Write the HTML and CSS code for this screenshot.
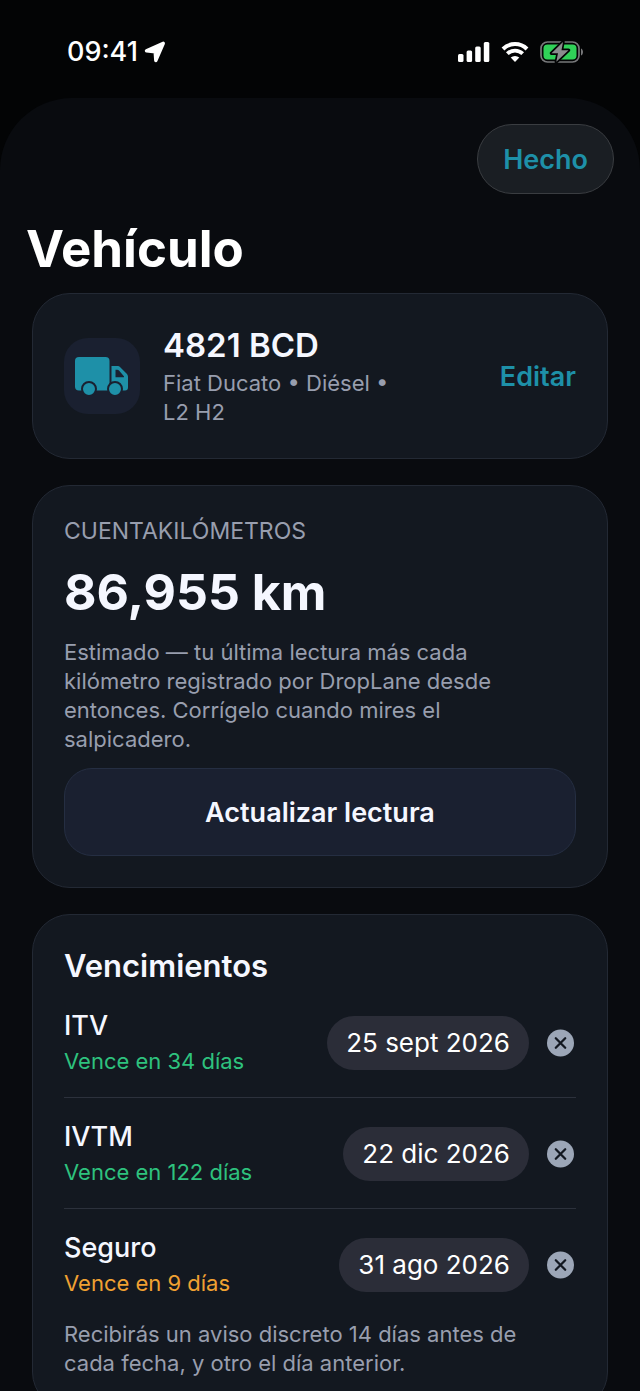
FILE: index.html
```html
<!DOCTYPE html>
<html lang="es">
<head>
    <meta charset="UTF-8">
    <meta name="viewport" content="width=device-width, initial-scale=1.0">
    <title>Vehículo</title>
    <link rel="stylesheet" href="styles.css">
</head>
<body>
    <div class="screen">
        <header class="status-bar">
            <div class="status-time">
                <span>09:41</span>
                <svg width="22" height="22" viewBox="0 0 22 22" aria-hidden="true">
                    <path d="M19.300 2.300 2.500 9.700l8.700 1.100.6 8.700z" fill="#fff" stroke="#fff" stroke-width="3.400" stroke-linejoin="round"/>
                </svg>
            </div>
            <div class="status-icons">
                <svg width="32" height="20" viewBox="0 0 32 20" fill="#fff" aria-hidden="true">
                    <rect x="0" y="12" width="5.500" height="8" rx="1.500"/>
                    <rect x="8.600" y="8.500" width="5.500" height="11.500" rx="1.500"/>
                    <rect x="17.200" y="4.500" width="5.500" height="15.500" rx="1.500"/>
                    <rect x="25.800" y="0" width="5.500" height="20" rx="1.500"/>
                </svg>
                <svg width="28" height="20" viewBox="0 0 28 20" fill="none" stroke="#fff" aria-hidden="true">
                    <path d="M2 7a17 17 0 0 1 24 0" stroke-width="4"/>
                    <path d="M6.300 11.700a11 11 0 0 1 15.400 0" stroke-width="3.800"/>
                    <path d="M14 19.900l-4.300-4.300a6.300 6.300 0 0 1 8.600 0z" fill="#fff" stroke="none"/>
                </svg>
                <svg width="44" height="22" viewBox="0 0 44 22" aria-hidden="true">
                    <rect x="1" y="1" width="38" height="20" rx="6.500" fill="none" stroke="#77787a" stroke-width="1.700"/>
                    <rect x="3.500" y="3.500" width="33" height="15" rx="4" fill="#30d158"/>
                    <path d="M41 7.500c2.700 1 2.700 6 0 7z" fill="#77787a"/>
                    <path d="M23 1 11.500 12.300h6.500L16.300 20.800 28.500 9.200h-7z" fill="#8b8c8e" stroke="#030405" stroke-width="3.400" stroke-linejoin="round" paint-order="stroke"/>
                </svg>
            </div>
        </header>

        <main class="sheet">
            <div class="toolbar">
                <button type="button" class="done-button">Hecho</button>
            </div>

            <h1>Vehículo</h1>

            <div class="cards">
                <section class="card vehicle">
                    <div class="vehicle-icon">
                        <svg width="54" height="40" viewBox="0 0 54 40" aria-hidden="true">
                            <path d="M4 1h26.500a4 4 0 0 1 4 4v29.500H4a4 4 0 0 1-4-4V5a4 4 0 0 1 4-4z" fill="#1e90a8"/>
                            <path d="M36.500 10H42c1.500 0 2.500.4 3.500 1.400l6 6.200c1 1 1.500 2.200 1.500 3.600v10.300a3 3 0 0 1-3 3H34v-2.700h2.500z" fill="#1e90a8"/>
                            <path d="M40.500 13.800h1.700c.8 0 1.300.2 1.800.8l4.700 5.300c.6.7.4 1.400-.5 1.400h-7.700z" fill="#1a2030"/>
                            <circle cx="14" cy="33" r="7" fill="#1e90a8" stroke="#1a2030" stroke-width="2"/>
                            <circle cx="40" cy="33" r="7" fill="#1e90a8" stroke="#1a2030" stroke-width="2"/>
                        </svg>
                    </div>
                    <div class="vehicle-info">
                        <h2 class="plate">4821 BCD</h2>
                        <p class="note">Fiat Ducato • Diésel • L2 H2</p>
                    </div>
                    <button type="button" class="edit-button">Editar</button>
                </section>

                <section class="card odometer">
                    <h2 class="label">CUENTAKILÓMETROS</h2>
                    <p class="reading">86,955 km</p>
                    <p class="note">Estimado — tu última lectura más cada kilómetro registrado por DropLane desde entonces. Corrígelo cuando mires el salpicadero.</p>
                    <button type="button" class="update-button">Actualizar lectura</button>
                </section>

                <section class="card deadlines">
                    <h2>Vencimientos</h2>
                    <ul class="deadline-list">
                        <li class="deadline">
                            <div class="deadline-info">
                                <h3>ITV</h3>
                                <p class="ok">Vence en 34 días</p>
                            </div>
                            <button type="button" class="date-button">25 sept 2026</button>
                            <button type="button" class="clear-button" aria-label="Quitar fecha de ITV">
                                <svg width="29" height="28" viewBox="0 0 29 28" aria-hidden="true"><circle cx="13.500" cy="14" r="13.500" fill="#9ca6b7"/><path d="M8.800 9.300l9.400 9.400M18.200 9.300l-9.400 9.400" stroke="#131821" stroke-width="2.300" stroke-linecap="round"/></svg>
                            </button>
                        </li>
                        <li class="deadline">
                            <div class="deadline-info">
                                <h3>IVTM</h3>
                                <p class="ok">Vence en 122 días</p>
                            </div>
                            <button type="button" class="date-button">22 dic 2026</button>
                            <button type="button" class="clear-button" aria-label="Quitar fecha de IVTM">
                                <svg width="29" height="28" viewBox="0 0 29 28" aria-hidden="true"><circle cx="13.500" cy="14" r="13.500" fill="#9ca6b7"/><path d="M8.800 9.300l9.400 9.400M18.200 9.300l-9.400 9.400" stroke="#131821" stroke-width="2.300" stroke-linecap="round"/></svg>
                            </button>
                        </li>
                        <li class="deadline">
                            <div class="deadline-info">
                                <h3>Seguro</h3>
                                <p class="soon">Vence en 9 días</p>
                            </div>
                            <button type="button" class="date-button">31 ago 2026</button>
                            <button type="button" class="clear-button" aria-label="Quitar fecha de Seguro">
                                <svg width="29" height="28" viewBox="0 0 29 28" aria-hidden="true"><circle cx="13.500" cy="14" r="13.500" fill="#9ca6b7"/><path d="M8.800 9.300l9.400 9.400M18.200 9.300l-9.400 9.400" stroke="#131821" stroke-width="2.300" stroke-linecap="round"/></svg>
                            </button>
                        </li>
                    </ul>
                    <p class="note">Recibirás un aviso discreto 14 días antes de cada fecha, y otro el día anterior.</p>
                </section>
            </div>
        </main>
    </div>
</body>
</html>
```
FILE: styles.css
```css
* {
    box-sizing: border-box;
}
body, h1, h2, h3, p, ul {
    margin: 0;
    padding: 0;
}
body {
    font-family: Inter, "Liberation Sans", sans-serif;
    background: #030405;
    color: #f5f7ff;
}
button {
    font-family: inherit;
    color: inherit;
    border: none;
    background: none;
    padding: 0;
    cursor: pointer;
}
svg {
    display: block;
}
.screen {
    height: 100vh;
    overflow: hidden;
}

/* Status bar */
.status-bar {
    display: flex;
    justify-content: space-between;
    align-items: center;
    height: 98px;
    padding: 5px 56px 0 67px;
}
.status-time {
    display: flex;
    align-items: center;
    gap: 6px;
    color: #fff;
    font-size: 27px;
    font-weight: 500;
}
.status-icons {
    display: flex;
    align-items: center;
    gap: 11px;
}

/* Sheet */
.sheet {
    background: #090b0f;
    border-radius: 72px 72px 0 0;
}
.toolbar {
    display: flex;
    justify-content: flex-end;
    padding: 26px 26px 0;
}
.done-button {
    height: 70px;
    padding: 0 25px;
    border: 1px solid #3a3d41;
    border-radius: 35px;
    background: #1a1e23;
    color: #1e90a8;
    font-size: 27px;
    font-weight: 600;
}
h1 {
    padding: 24px 26px 13px;
    color: #fff;
    font-size: 51px;
    line-height: 62px;
    font-weight: 700;
}

/* Cards */
.cards {
    display: flex;
    flex-direction: column;
    gap: 26px;
    padding: 0 32px 32px;
}
.card {
    padding: 31px;
    border: 1px solid #232934;
    border-radius: 38px;
    background: #131820;
}
.label,
.note {
    color: #989eae;
    font-size: 22px;
    line-height: 29px;
    font-weight: 400;
}
.label {
    font-size: 23px;
}
.card > .note {
    padding-right: 20px;
}
.vehicle {
    display: flex;
    align-items: center;
    gap: 23px;
}
.vehicle-icon {
    display: flex;
    align-items: center;
    justify-content: center;
    width: 76px;
    height: 76px;
    border-radius: 24px;
    background: #1a2030;
}
.vehicle-info {
    flex: 1;
    max-width: 240px;
}
.plate {
    margin-bottom: 4px;
    font-size: 33px;
    line-height: 40px;
    font-weight: 600;
}
.edit-button {
    margin-left: auto;
    color: #1e90a8;
    font-size: 27px;
    font-weight: 600;
}

.odometer {
    display: flex;
    flex-direction: column;
    gap: 14px;
}
.reading {
    font-size: 50px;
    line-height: 64px;
    font-weight: 700;
}
.update-button {
    height: 88px;
    border: 1px solid #252e42;
    border-radius: 28px;
    background: #1a2030;
    font-size: 27px;
    font-weight: 600;
}

.deadlines h2 {
    margin-bottom: 23px;
    font-size: 31px;
    line-height: 40px;
    font-weight: 600;
}
.deadline-list {
    list-style: none;
}
.deadline {
    display: flex;
    align-items: center;
    gap: 18px;
    margin-bottom: 22px;
}
.deadline:not(:last-child) {
    padding-bottom: 21px;
    border-bottom: 1px solid #2c313c;
}
.deadline-info {
    flex: 1;
}
.deadline h3 {
    margin-bottom: 4px;
    font-size: 27px;
    line-height: 34px;
    font-weight: 500;
}
.deadline p {
    font-size: 22px;
    line-height: 29px;
}
.ok {
    color: #2ec27e;
}
.soon {
    color: #f0a132;
}
.date-button {
    height: 54px;
    padding: 0 19px;
    border-radius: 27px;
    background: #2b2d38;
    color: #fff;
    font-size: 26px;
}
```
